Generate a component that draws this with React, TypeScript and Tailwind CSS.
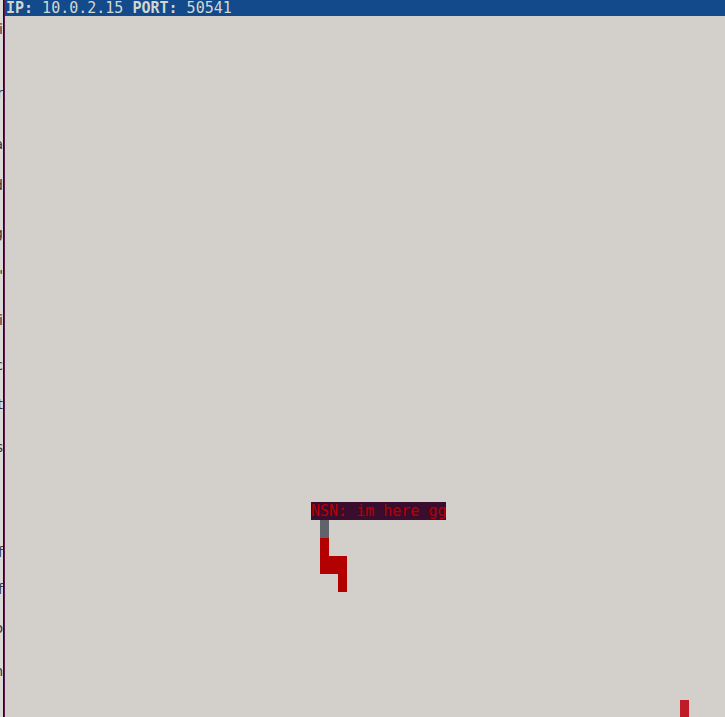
import React from 'react';

// cut-off characters peeking in from the window to the left
const edgeLetters: { ch: string; cls: string }[] = [
  { ch: 'i', cls: 'mt-[22px]' },
  { ch: 'r', cls: 'mt-[50px]' },
  { ch: 'a', cls: 'mt-[37px]' },
  { ch: 'd', cls: 'mt-[27px]' },
  { ch: 'g', cls: 'mt-[34px]' },
  { ch: "'", cls: 'mt-[28px]' },
  { ch: 'i', cls: 'mt-[31px]' },
  { ch: 'c', cls: 'mt-[31px]' },
  { ch: 't', cls: 'mt-[25px]' },
  { ch: 's', cls: 'mt-[29px]' },
  { ch: 'f', cls: 'mt-[91px]' },
  { ch: 'f', cls: 'mt-[23px]' },
  { ch: 'o', cls: 'mt-[25px]' },
  { ch: 'n', cls: 'mt-[29px]' },
];

const App: React.FC = () => {
  return (
    <div className="flex w-[725px] h-[717px] overflow-hidden bg-[#d3d0cb] font-['DejaVu_Sans_Mono',monospace]">
      <div className="w-[3px] shrink-0 bg-[#dcdad7] flex flex-col overflow-hidden font-['DejaVu_Sans',sans-serif] text-[14px] leading-[14px] text-[#3a3a3a]">
        {edgeLetters.map((l, i) => (
          <div key={i} className={`${l.cls} flex justify-end`}>
            <span className="shrink-0">{l.ch}</span>
          </div>
        ))}
      </div>
      <div className="w-[1px] shrink-0 bg-[#1c1018]" />
      <div className="w-[1px] shrink-0 bg-[#5a1a4c]" />

      <div className="flex-1 flex flex-col">
        <div className="h-[16px] bg-[#134a8c] text-[#d3d7cf] text-[15px] leading-[16px] pl-[1px] whitespace-pre">
          <span className="font-bold">IP:</span> 10.0.2.15 <span className="font-bold">PORT:</span> 50541
        </div>

        <div className="grid grid-cols-[repeat(80,9px)] grid-rows-[repeat(39,18px)] text-[15px] leading-[18px]">
          <div className="col-start-[35] col-span-15 row-start-[28] bg-[#3a0d2e] text-[#b80000] whitespace-pre">
            NSN: im here gg
          </div>
          <div className="col-start-[36] row-start-[29] bg-[#62626a]" />
          <div className="col-start-[36] row-start-[30] row-span-2 bg-[#b30000]" />
          <div className="col-start-[37] col-span-2 row-start-[31] bg-[#b30000]" />
          <div className="col-start-[38] row-start-[32] bg-[#b30000]" />
          <div className="col-start-[76] row-start-[39] bg-[#c01c28]" />
        </div>
      </div>
    </div>
  );
};

export default App;
